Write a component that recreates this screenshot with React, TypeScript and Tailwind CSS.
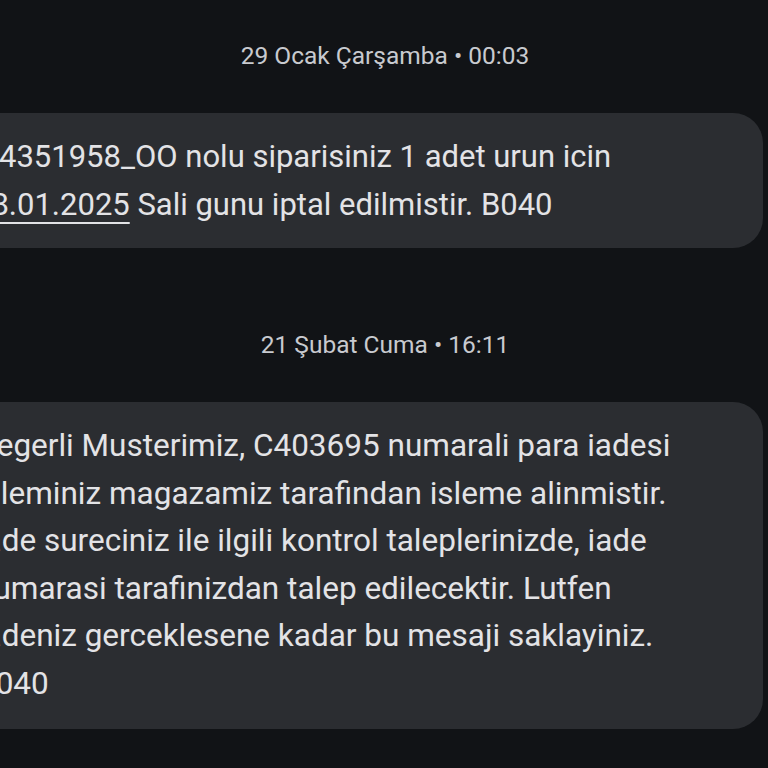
import React from "react";

const font = { fontFamily: "Roboto, 'Noto Sans', sans-serif" };

const DateHeader = ({ label }: { label: string }) => (
  <div className="h-[28px] flex items-center justify-center text-[24.5px] leading-[28px] text-[#c8cacf] pl-[2px]">
    {label}
  </div>
);

const secondMessage = [
  "Degerli Musterimiz, C403695 numarali para iadesi",
  "Isleminiz magazamiz tarafindan isleme alinmistir.",
  "Iade sureciniz ile ilgili kontrol taleplerinizde, iade",
  "numarasi tarafinizdan talep edilecektir. Lutfen",
  "Iadeniz gerceklesene kadar bu mesaji saklayiniz.",
  "B040",
];

export default function App() {
  return (
    <div className="w-full h-screen overflow-hidden bg-[#111316] text-[#e3e3e6]" style={font}>
      <div className="pt-[42px]">
        <DateHeader label="29 Ocak Çarşamba • 00:03" />
      </div>

      <div className="mt-[43px] ml-[-60px] mr-[5px] rounded-[30px] bg-[#2b2d31] pl-[36px] pt-[20px] pb-[19px] text-[31px] leading-[48px] whitespace-nowrap">
        <div className="ml-[23px]">4351958_OO nolu siparisiniz 1 adet urun icin</div>
        <div className="ml-[-2px]">
          <span className="underline decoration-2 underline-offset-[7px]">28.01.2025</span> Sali gunu iptal edilmistir. B040
        </div>
      </div>

      <div className="mt-[83px]">
        <DateHeader label="21 Şubat Cuma • 16:11" />
      </div>

      <div className="mt-[43px] ml-[-60px] mr-[5px] rounded-[30px] bg-[#2b2d31] pl-[36px] pt-[20px] pb-[22px] text-[31.5px] leading-[47.5px] whitespace-nowrap">
        {secondMessage.map((line, i) => (
          <div key={i}>{line}</div>
        ))}
      </div>
    </div>
  );
}
